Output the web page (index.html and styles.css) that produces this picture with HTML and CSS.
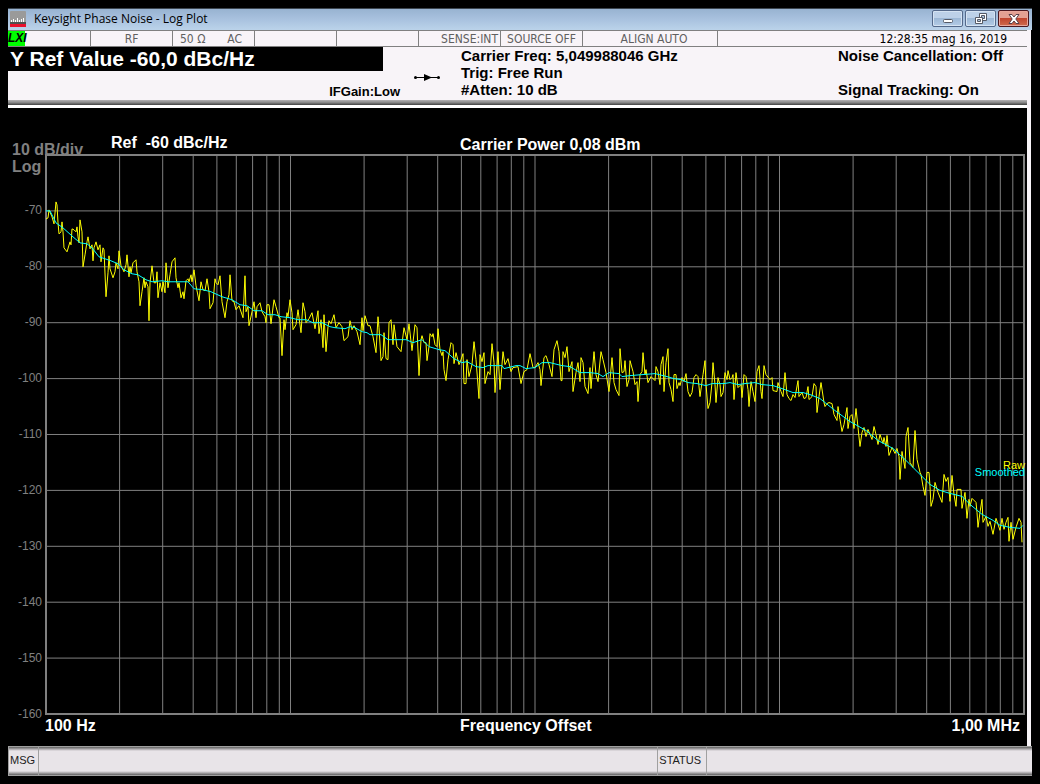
FILE: index.html
```html
<!DOCTYPE html>
<html lang="en">
<head>
    <meta charset="UTF-8">
    <meta name="viewport" content="width=device-width, initial-scale=1.0">
    <title>Keysight Phase Noise - Log Plot</title>
    <link rel="stylesheet" href="styles.css">
</head>
<body>
    <header class="titlebar">
        <svg class="app-icon" width="16" height="16" viewBox="0 0 16 16" aria-hidden="true">
            <rect width="16" height="16" rx="1" fill="#9a9a9a"/>
            <rect y="11" width="16" height="2" fill="#505050"/>
            <rect y="13" width="16" height="3" fill="#e8112d"/>
            <path d="M1.5 9v2M3.5 8v3M5.5 9v2M7.5 7v4M9.5 9v2M11.5 8v3M13.5 7v4" stroke="#fff" fill="none"/>
        </svg>
        <h1>Keysight Phase Noise - Log Plot</h1>
        <div class="window-buttons">
            <button type="button" aria-label="Minimize">
                <svg width="12" height="12" viewBox="0 0 12 12"><rect x="1.5" y="6.5" width="9" height="3" rx="1" fill="#fff" stroke="#555a66"/></svg>
            </button>
            <button type="button" aria-label="Restore">
                <svg width="12" height="12" viewBox="0 0 12 12" stroke="#555a66" fill="#fff">
                    <path d="M4.5 .5h7v7h-7z"/>
                    <path d="M6.5 2.5h3v3h-3z" fill="#a9c0da"/>
                    <path d="M.5 4.5h7v6h-7z"/>
                    <path d="M2.5 6.5h3v2h-3z" fill="#a9c0da"/>
                </svg>
            </button>
            <button type="button" class="close" aria-label="Close">
                <svg width="12" height="12" viewBox="0 0 12 12"><path d="M1 1.5h3L6 4l2-2.500h3L7.800 6l3.200 4.500H8L6 8l-2 2.500H1L4.200 6z" fill="#fff" stroke="#5a4048"/></svg>
            </button>
        </div>
    </header>

    <main class="screen">
        <div class="status-row">
            <div class="lxi-cell"><span class="lxi">LXI</span></div>
            <div>RF</div>
            <div class="coupling"><span>50 Ω</span><span>AC</span></div>
            <div></div>
            <div></div>
            <div class="sense">SENSE:INT</div>
            <div>SOURCE OFF</div>
            <div class="align">ALIGN AUTO</div>
            <div class="clock">12:28:35 mag 16, 2019</div>
        </div>

        <section class="info">
            <div class="info-left">
                <div class="active-value">Y Ref Value -60,0 dBc/Hz</div>
                <div class="gain">IFGain:Low</div>
            </div>
            <svg class="sweep" width="26" height="9" viewBox="0 0 26 9" aria-hidden="true">
                <path d="M1 4.500h24" stroke="#000"/>
                <path d="M10 1l8 3.500-8 3.500z"/>
                <circle cx="1.500" cy="4.500" r="1.500"/>
                <circle cx="24.500" cy="4.500" r="1.500"/>
            </svg>
            <div class="info-mid">
                <div>Carrier Freq: 5,049988046 GHz</div>
                <div>Trig: Free Run</div>
                <div>#Atten: 10 dB</div>
            </div>
            <div class="info-right">
                <div>Noise Cancellation: Off</div>
                <div>Signal Tracking: On</div>
            </div>
        </section>

        <section class="plot">
            <div class="plot-head">
                <div class="ref">Ref&nbsp; -60 dBc/Hz</div>
                <div>Carrier Power 0,08 dBm</div>
            </div>
            <div class="plot-body">
                <div class="scale">10 dB/div<br>Log</div>
                <div class="y-axis">
                    <span>-70</span>
                    <span>-80</span>
                    <span>-90</span>
                    <span>-100</span>
                    <span>-110</span>
                    <span>-120</span>
                    <span>-130</span>
                    <span>-140</span>
                    <span>-150</span>
                    <span>-160</span>
                </div>
                <div class="chart">
                    <svg viewBox="46 155 978 560" preserveAspectRatio="none" role="img" aria-label="Phase noise against frequency offset">
                        <path id="grid" class="grid"/>
                        <polyline class="raw" points="46,219 48,218 49,210 52,217 54,224 56,202 57,205 58,223 59,234 61,232 62,222 63,232 64,248 67,252 70,242 71,245 72,229 74,230 76,232 77,227 78,237 79,243 80,220 82,232 83,267 85,255 87,242 88,237 90,249 92,245 93,261 94,248 96,242 98,250 100,245 101,262 103,248 104,250 106,297 108,273 109,256 110,269 113,278 115,272 116,263 118,269 119,251 121,266 124,272 126,265 127,255 129,277 130,267 131,273 133,263 136,260 137,272 139,282 140,306 142,292 144,278 145,288 146,282 148,287 149,321 150,283 152,266 154,283 156,283 157,272 158,298 160,283 162,292 163,282 165,293 166,263 168,288 170,275 172,262 175,258 176,278 178,288 179,283 181,298 183,292 184,299 186,281 188,279 189,282 191,275 192,282 194,270 196,286 199,301 201,282 203,290 205,291 207,279 209,292 210,309 213,303 215,279 216,283 218,285 220,276 222,302 225,318 227,302 229,295 230,275 232,301 234,302 236,310 239,306 243,318 245,276 246,312 248,307 249,326 252,312 254,302 256,318 257,307 260,303 262,312 265,317 266,323 267,305 269,305 271,324 274,300 276,307 279,318 280,318 282,356 284,320 285,330 287,313 288,317 290,300 292,313 293,330 296,325 298,310 301,333 303,303 305,312 306,323 309,319 312,313 315,329 318,311 319,334 321,320 323,348 324,315 326,352 328,327 329,321 331,324 334,315 336,328 339,323 342,327 344,341 348,337 350,321 352,330 354,326 357,332 360,345 362,318 363,331 365,316 368,326 370,326 373,337 376,353 378,317 379,328 381,361 383,357 384,333 386,359 388,360 389,323 391,320 393,345 394,325 397,347 401,352 404,328 407,340 409,324 412,351 415,325 417,328 419,376 421,340 422,336 424,343 426,343 427,361 429,347 430,334 432,337 433,334 435,345 437,347 438,329 440,350 442,356 443,352 444,370 446,381 448,360 451,343 453,345 454,364 456,353 459,365 461,360 463,354 464,384 466,384 467,360 469,377 472,365 474,342 476,360 479,399 480,355 482,362 484,353 485,384 488,372 490,375 492,344 494,363 495,393 498,352 500,390 503,352 505,365 508,359 511,372 513,368 518,367 521,384 524,372 527,370 530,354 533,368 535,368 538,363 540,370 541,386 544,358 546,356 549,365 552,377 554,350 557,341 559,352 561,381 562,381 563,352 565,358 567,347 569,372 572,362 573,392 576,373 578,363 580,382 581,358 583,363 585,387 588,394 590,368 591,389 594,352 596,375 598,382 601,352 603,360 606,373 609,392 612,358 614,383 616,390 619,396 620,349 622,373 624,372 625,361 627,387 629,380 630,361 633,372 635,385 637,382 638,402 640,375 642,372 643,353 645,375 646,370 648,383 651,377 655,381 656,367 658,372 660,385 661,365 663,357 664,392 666,363 668,349 669,383 671,390 673,402 674,375 676,375 677,389 679,383 680,386 682,378 684,382 686,374 688,392 690,397 692,393 694,378 696,375 698,377 700,397 703,375 705,361 706,385 708,409 710,403 712,383 713,363 715,385 716,403 718,378 720,385 721,397 723,393 725,373 727,380 728,371 730,380 732,378 733,375 734,400 736,373 738,388 741,385 742,398 744,375 746,377 748,390 749,407 751,382 753,392 755,402 757,372 759,366 761,392 762,399 764,366 766,375 770,380 772,378 773,391 777,392 778,383 781,392 783,397 785,373 787,395 789,399 791,401 793,395 795,398 798,381 799,397 802,393 804,399 806,398 808,387 809,400 812,397 814,384 816,387 817,413 819,397 821,383 824,403 825,407 827,404 829,403 832,404 834,415 837,421 838,407 840,420 842,432 844,425 847,408 848,429 850,417 852,415 854,429 856,409 858,428 860,447 862,433 864,428 866,437 868,430 872,440 874,427 876,435 878,445 880,435 883,444 884,438 886,447 887,436 889,456 892,448 895,454 897,449 899,457 900,480 902,452 903,458 905,469 906,437 908,428 910,463 913,468 915,431 917,460 920,473 921,475 923,487 925,496 927,473 929,473 930,487 931,507 933,500 935,483 938,493 942,503 944,475 946,482 948,478 950,502 952,476 954,495 956,507 957,490 961,490 962,509 965,493 967,519 969,500 970,507 972,499 976,503 977,513 978,528 980,513 982,500 983,523 986,517 988,527 990,522 993,535 996,519 1000,531 1002,519 1004,530 1006,523 1008,518 1009,542 1011,523 1013,540 1016,528 1019,519 1021,523 1022,543"/>
                        <polyline class="smoothed" points="46,211 50,211 56,223 63,228 73,237 80,243 87,244 92,248 99,257 111,261 118,264 124,270 132,274 138,275 146,280 152,282 162,281 168,282 188,282 194,289 203,290 211,292 222,297 232,300 240,305 247,306 254,311 262,311 268,315 275,315 281,317 290,318 298,320 306,320 313,323 322,323 330,327 335,328 345,329 350,327 355,328 362,332 367,333 370,335 381,335 388,340 406,340 413,343 422,340 429,347 439,350 445,351 454,359 462,363 467,362 476,367 483,368 488,366 502,366 504,369 516,366 520,366 526,369 535,368 542,363 550,363 562,366 570,367 580,373 590,373 598,374 603,377 609,373 619,374 622,377 630,376 655,374 667,377 674,379 681,380 688,383 697,384 706,386 712,384 724,384 730,383 738,385 745,384 755,383 762,385 773,386 782,389 793,393 803,393 810,395 820,399 835,411 850,422 866,431 878,441 893,449 905,460 917,472 930,485 940,491 950,494 962,497 970,505 982,515 993,521 1000,526 1010,528 1020,529 1023,526"/>
                    </svg>
                    <div class="legend">
                        <span class="legend-raw">Raw</span>
                        <span class="legend-smoothed">Smoothed</span>
                    </div>
                </div>
            </div>
            <div class="x-axis">
                <span>100 Hz</span>
                <span>Frequency Offset</span>
                <span>1,00 MHz</span>
            </div>
        </section>
    </main>

    <footer class="message-bar">
        <div>MSG</div>
        <div></div>
        <div>STATUS</div>
        <div></div>
    </footer>

    <script src="script.js"></script>
</body>
</html>
```
FILE: styles.css
```css
* {
    box-sizing: border-box;
}
body {
    display: flex;
    flex-direction: column;
    min-height: 100vh;
    margin: 0;
    padding: 8px;
    background-color: #000;
    font-family: "Liberation Sans", Arial, sans-serif;
}

/* title bar */
.titlebar {
    display: flex;
    align-items: center;
    height: 22px;
    padding: 0 3px 2px 2px;
    border-top: 1px solid #3c4650;
    background: linear-gradient(#98b3d1, #a9c2df 50%, #bbd3ea);
}
.titlebar h1 {
    flex: 1;
    margin: 0 0 0 8px;
    font: 12px "Open Sans", sans-serif;
    color: #000;
}
.window-buttons {
    display: flex;
    gap: 2px;
}
.window-buttons button {
    display: flex;
    align-items: center;
    justify-content: center;
    width: 31px;
    height: 17px;
    padding: 0;
    border: 1px solid #54698a;
    border-radius: 2px;
    box-shadow: inset 0 0 0 1px #d5e3f2;
    background: linear-gradient(#bdd1e8 50%, #9db8d6 50%, #b4cce6);
}
.window-buttons .close {
    border-color: #4a1820;
    box-shadow: inset 0 0 0 1px #e8a79c;
    background: linear-gradient(#e3a093 50%, #c0452f 50%, #cf6c4f);
}

/* instrument screen */
.screen {
    flex: 1;
    display: flex;
    flex-direction: column;
    border-right: 4px solid #f8f4f8;
    margin-right: 1px;
    background-color: #f8f4f8;
}
.status-row {
    display: grid;
    grid-template-columns: 83px repeat(6, 82px) 135px 1fr;
    height: 17px;
    border-top: 1px solid #808080;
    border-bottom: 1px solid #808080;
    font: 12px/16px "DejaVu Sans Condensed", "DejaVu Sans", sans-serif;
    color: #606060;
    text-align: center;
    white-space: nowrap;
}
.status-row > div {
    border-right: 1px solid #808080;
}
.status-row .lxi-cell {
    text-align: left;
}
.lxi {
    display: block;
    width: 17px;
    height: 15px;
    background-color: #00ff00;
    font: italic bold 12px/15px "Liberation Sans", sans-serif;
    color: #000;
    text-align: center;
}
.status-row .coupling {
    display: flex;
    justify-content: space-between;
    padding: 0 12px 0 7px;
}
.status-row .sense {
    padding-right: 2px;
    text-align: right;
}
.status-row .align {
    padding-left: 8px;
}
.status-row .clock {
    border-right: 0;
    padding-right: 20px;
    color: #000;
    text-align: right;
}
.info {
    display: grid;
    grid-template-columns: 406px 47px 377px 1fr;
    height: 61px;
    padding-bottom: 8px;
    border-bottom: 3px solid #fff;
    background: linear-gradient(#b4b2b4, #888 50%, #404040) bottom / 100% 5px no-repeat;
    font-size: 15px;
    font-weight: bold;
    line-height: 17px;
    white-space: nowrap;
}
.info-left {
    display: flex;
    flex-direction: column;
    justify-content: space-between;
}
.active-value {
    width: 375px;
    padding-left: 2px;
    background-color: #000;
    color: #fff;
    font-size: 21px;
    line-height: 24px;
}
.gain {
    padding-right: 14px;
    font-size: 13px;
    line-height: 12px;
    text-align: right;
}
.sweep {
    margin-top: 26px;
}
.info-right {
    display: flex;
    flex-direction: column;
    justify-content: space-between;
}

/* plot */
.plot {
    flex: 1;
    display: flex;
    flex-direction: column;
    padding: 0 2px 10px 0;
    background-color: #000;
    color: #fff;
    font-size: 16px;
    font-weight: bold;
}
.plot-head {
    display: grid;
    grid-template-columns: 452px 1fr;
    height: 46px;
    padding-top: 26px;
    line-height: 21px;
}
.ref {
    padding-left: 103px;
    line-height: 18px;
}
.plot-body {
    position: relative;
    flex: 1;
    display: grid;
    grid-template-columns: 37px 1fr;
}
.scale {
    position: absolute;
    top: -13px;
    left: 4px;
    line-height: 17px;
    color: #808080;
}
.y-axis {
    display: flex;
    flex-direction: column;
    margin-bottom: -5px;
    padding: 6px 3px 0 0;
    font-size: 12px;
    font-weight: normal;
    line-height: 12px;
    color: #808080;
}
.y-axis span {
    flex: 1;
    display: flex;
    align-items: flex-end;
    justify-content: flex-end;
}
.chart {
    position: relative;
    border: 2px solid #808080;
}
.chart svg {
    position: absolute;
    top: -1px;
    left: -1px;
    width: calc(100% + 2px);
    height: calc(100% + 2px);
    shape-rendering: crispEdges;
}
.chart path,
.chart polyline {
    fill: none;
    stroke-width: 1px;
    vector-effect: non-scaling-stroke;
}
.grid {
    stroke: #808080;
}
.raw {
    stroke: #ffff00;
}
.smoothed {
    stroke: #00ffff;
}
.legend {
    position: absolute;
    top: 55%;
    right: -2px;
    display: flex;
    flex-direction: column;
    align-items: flex-end;
    font-size: 11px;
    font-weight: normal;
    line-height: 7px;
}
.legend-raw {
    color: #ffff00;
}
.legend-smoothed {
    color: #00ffff;
}
.x-axis {
    display: grid;
    grid-template-columns: 415px 1fr auto;
    padding: 1px 5px 0 37px;
    line-height: 20px;
}

/* message bar */
.message-bar {
    display: grid;
    grid-template-columns: 30px 620fr 49px 325fr;
    height: 30px;
    border: 1px solid #a0a0a0;
    border-right: 0;
    background: linear-gradient(#606060, #c8c4c8 3px, #e8e4e8 4px, #e8e4e8 24px, #c8c4c8 25px, #606060);
    font-size: 11px;
    line-height: 27px;
    color: #202020;
}
.message-bar div {
    padding-left: 1px;
    border-right: 1px solid #a0a0a0;
}
.message-bar div:last-child {
    border-right: 0;
}
```
FILE: script.js
```js
// log grid: four decades across, ten divisions down
const left = 46, top0 = 155, width = 978, height = 560;
let d = '';

for (let decade = 0; decade < 4; decade++) {
    for (let n = 1; n < 10; n++) {
        const x = left + (decade + Math.log10(n)) * width / 4;
        d += `M${x.toFixed(1)} ${top0}v${height}`;
    }
}
for (let i = 1; i < 10; i++) {
    d += `M${left} ${top0 + i * height / 10}h${width}`;
}
document.getElementById('grid').setAttribute('d', d);
```
